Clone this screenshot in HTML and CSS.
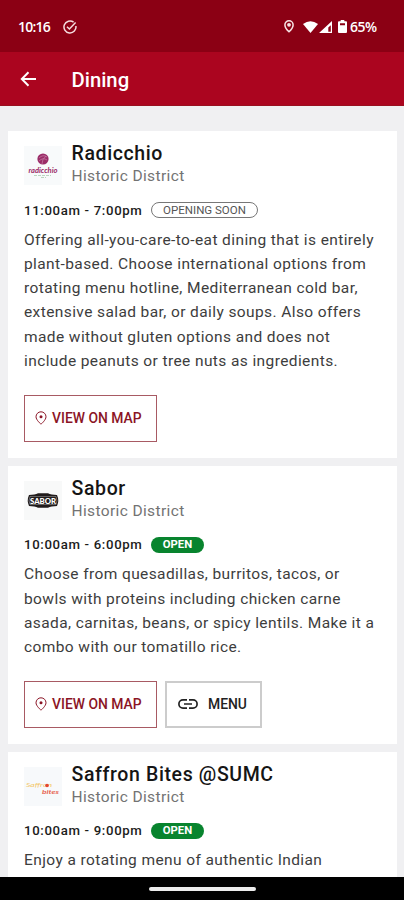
FILE: index.html
```
<!DOCTYPE html>
<html lang="en">
<head>
<meta charset="utf-8">
<title>Dining</title>
<link rel="stylesheet" href="styles.css">
</head>
<body>
<svg class="defs" width="0" height="0">
  <symbol id="pin" viewBox="0 0 12 14"><path d="M6 .8A5 5 0 0 0 1 5.8C1 9 6 13.2 6 13.2S11 9 11 5.8A5 5 0 0 0 6 .8Z" fill="none" stroke="currentColor"/><circle cx="6" cy="5.7" r="1.5" fill="currentColor"/></symbol>
</svg>
<div class="status">
  <span class="clock">10:16</span>
  <svg class="check" width="14" height="14" viewBox="0 0 14 14" fill="none" stroke="#f5dcdf" stroke-width="1.5"><path d="M10.6 2.2A6 6 0 1 0 12.9 6"/><path d="M4 6.700 6.400 9 12.600 2.600"/></svg>
  <svg class="loc" width="10" height="13" viewBox="0 0 10 13"><path d="M5 .8A4.1 4.1 0 0 0 .9 4.9C.9 7.8 5 11.8 5 11.8S9.1 7.8 9.1 4.9A4.1 4.1 0 0 0 5 .8Z" fill="none" stroke="#f8e4e6" stroke-width="1.5"/><circle cx="5" cy="4.8" r="1.9" fill="#f8e4e6"/></svg>
  <svg class="wifi" width="15" height="12" viewBox="0 0 15 12"><path d="M0 3Q7.5-2.4 15 3L7.5 12Z" fill="#fff"/></svg>
  <svg class="signal" width="13" height="12" viewBox="0 0 13 12"><path fill-rule="evenodd" d="M13 0V12H0ZM11.8 4.2 9.3 6.6V10.8H11.8Z" fill="#fff"/></svg>
  <svg class="battery" width="9" height="13" viewBox="0 0 9 13"><path fill-rule="evenodd" d="M2.7 0H6.3V1.3H8Q9 1.3 9 2.3V12Q9 13 8 13H1Q0 13 0 12V2.3Q0 1.3 1 1.3H2.7ZM2 3.2V5.2H7V3.2Z" fill="#fff"/></svg>
  <span class="percent">65%</span>
</div>
<header class="bar">
  <svg width="17" height="16" viewBox="0 0 17 16" fill="none" stroke="#fff" stroke-width="2"><path d="M16 8H2M8.500 1.200 1.800 8 8.500 14.800"/></svg>
  <h1>Dining</h1>
</header>
<main>
  <section class="card">
    <div class="head">
      <svg class="logo" width="38" height="39" viewBox="0 0 38 39"><rect width="38" height="39" fill="#f8fafb"/><circle cx="19" cy="13" r="5.6" fill="#9b2c68"/><path d="M15 12q4-4 8-1M15 15q4-4 8-1M18 18q0-5 4-8" stroke="#c583a7" stroke-width=".7" fill="none"/><text x="4.500" y="26.500" textLength="29" lengthAdjust="spacingAndGlyphs" class="logo-script">radicchio</text><path d="M10 29.500H27M17 31.500H22" stroke="#a8cdb1" stroke-width=".8" stroke-dasharray="3 1"/></svg>
      <div><h2>Radicchio</h2><p class="place">Historic District</p></div>
    </div>
    <div class="hours"><span class="time">11:00am - 7:00pm</span><span class="tag soon">OPENING SOON</span></div>
    <p class="desc">Offering all-you-care-to-eat dining that is entirely<br>plant-based. Choose international options from<br>rotating menu hotline, Mediterranean cold bar,<br>extensive salad bar, or daily soups. Also offers<br>made without gluten options and does not<br>include peanuts or tree nuts as ingredients.</p>
    <div class="actions"><a class="btn map"><svg width="12" height="14"><use href="#pin"/></svg><span>VIEW ON MAP</span></a></div>
  </section>
  <section class="card">
    <div class="head">
      <svg class="logo" width="38" height="39" viewBox="0 0 38 39"><rect width="38" height="39" fill="#f8f9f9"/><path d="M5 14Q11 14 14 12.300H24Q27 14 33 14Q35.500 19.500 33 25Q27 25 24 26.700H14Q11 25 5 25Q2.500 19.500 5 14Z" fill="#211c1c"/><path d="M6 15.500H32Q34 19.500 32 23.500H6Q4 19.500 6 15.500Z" fill="none" stroke="#aaa" stroke-width=".5"/><text x="6" y="22.500" textLength="26" lengthAdjust="spacingAndGlyphs" class="logo-block">SABOR</text></svg>
      <div><h2>Sabor</h2><p class="place">Historic District</p></div>
    </div>
    <div class="hours"><span class="time">10:00am - 6:00pm</span><span class="tag open">OPEN</span></div>
    <p class="desc">Choose from quesadillas, burritos, tacos, or<br>bowls with proteins including chicken carne<br>asada, carnitas, beans, or spicy lentils. Make it a<br>combo with our tomatillo rice.</p>
    <div class="actions"><a class="btn map"><svg width="12" height="14"><use href="#pin"/></svg><span>VIEW ON MAP</span></a><a class="btn menu"><svg width="20" height="10" viewBox="0 0 20 10" fill="none" stroke="#222" stroke-width="1.700"><path d="M9 .9H5A4.100 4.100 0 0 0 5 9.100H9M11 .9H15A4.100 4.100 0 0 1 15 9.100H11M6 5H14"/></svg><span>MENU</span></a></div>
  </section>
  <section class="card">
    <div class="head">
      <svg class="logo" width="38" height="39" viewBox="0 0 38 39"><rect width="38" height="39" fill="#f7f9fb"/><text x="2" y="19.500" textLength="26" lengthAdjust="spacingAndGlyphs" class="logo-saffron">Saffron</text><circle cx="23" cy="18.500" r="1.800" fill="#e3442f"/><text x="18" y="26.500" textLength="17" lengthAdjust="spacingAndGlyphs" class="logo-bites">bites</text></svg>
      <div><h2>Saffron Bites @SUMC</h2><p class="place">Historic District</p></div>
    </div>
    <div class="hours"><span class="time">10:00am - 9:00pm</span><span class="tag open">OPEN</span></div>
    <p class="desc">Enjoy a rotating menu of authentic Indian</p>
  </section>
</main>
<footer class="nav"><span class="handle"></span></footer>
</body>
</html>
```
FILE: styles.css
```
* { box-sizing: border-box; margin: 0; padding: 0; }
body { width: 404px; height: 900px; overflow: hidden; display: flex; flex-direction: column; background: #f0f0f2; font-family: Roboto, sans-serif; }
svg { flex: none; display: block; }
.defs { position: absolute; }
.status { flex: none; height: 52px; background: #8b0014; display: flex; align-items: center; padding: 1px 27px 0 18px; color: #fff; }
.clock, .percent { font: 600 14px/20px "Open Sans", sans-serif; white-space: nowrap; }
.clock { width: 33px; letter-spacing: -.8px; }
.check { margin-left: 12px; }
.loc { margin-left: auto; }
.wifi { margin-left: 9px; }
.signal { margin-left: 1px; }
.battery { margin-left: 6px; }
.percent { margin-left: 3px; width: 27px; letter-spacing: -.5px; }
.bar { flex: none; height: 54px; background: #ab051f; border-bottom: 1px solid #99101f; display: flex; align-items: center; padding-left: 20px; color: #fff; }
.bar h1 { margin: 2px 0 0 34.5px; font: 500 20.3px/26px Roboto, sans-serif; }
main { flex: 1; min-height: 0; overflow: hidden; padding: 25px 7px 0 8px; display: flex; flex-direction: column; gap: 8px; }
.card { flex: none; background: #fff; padding: 11px 16px 16px; }
.head { display: flex; gap: 9.5px; height: 44px; }
.logo { margin-top: 4px; }
h2 { font: 500 19.5px/24px Roboto, sans-serif; letter-spacing: .62px; color: #151515; white-space: nowrap; }
.place { font-size: 15.5px; line-height: 20px; letter-spacing: .37px; color: #737373; }
.hours { display: flex; align-items: center; height: 16px; margin-top: 16px; }
.time { width: 127px; font-size: 13.2px; font-weight: 500; letter-spacing: .66px; color: #1c1c1c; white-space: nowrap; }
.tag { height: 16px; border-radius: 8px; font-size: 11.5px; line-height: 16px; text-align: center; white-space: nowrap; }
.soon { width: 107px; border: 1px solid #777; line-height: 14px; color: #555; }
.open { width: 53px; background: #08842e; color: #fff; font-weight: 700; font-size: 11.3px; }
.desc { margin-top: 9.5px; font-size: 15.5px; line-height: 24.3px; letter-spacing: .4px; color: #3d3d3d; white-space: nowrap; }
.actions { display: flex; gap: 8px; margin-top: 21.5px; }
.btn { height: 47px; display: flex; align-items: center; font-size: 13.9px; font-weight: 500; white-space: nowrap; }
.map { width: 133px; border: 1px solid #a85a63; padding-left: 10px; gap: 5px; color: #8b1425; }
.menu { width: 97px; border: 2px solid #ccc; padding-left: 11px; gap: 10px; color: #222; }
.nav { flex: none; height: 23px; background: #000; display: flex; justify-content: center; align-items: center; }
.handle { width: 107px; height: 4px; border-radius: 2px; background: #ececec; }
.logo-script { font: italic 700 8px Lato, sans-serif; fill: #9b2c68; }
.logo-block { font: 900 8px Lato, sans-serif; fill: #fff; }
.logo-saffron { font: italic 400 6px/1 Lato, sans-serif; fill: #f3c667; }
.logo-bites { font: italic 700 6px/1 Lato, sans-serif; fill: #e86450; }
```
